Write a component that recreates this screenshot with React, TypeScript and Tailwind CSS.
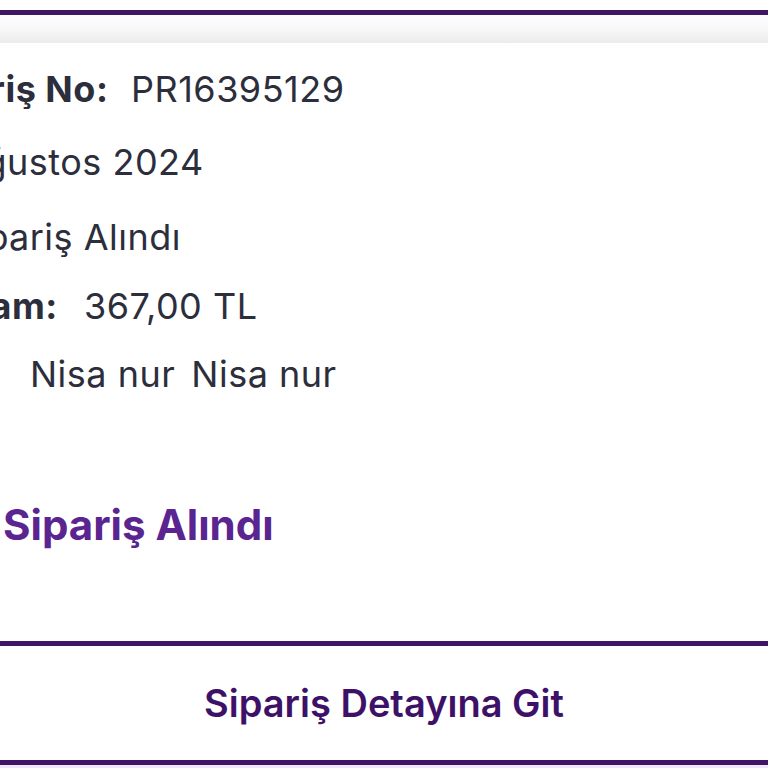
import React from 'react';

interface RowProps {
  hidden: React.ReactNode;
  shown: React.ReactNode;
  value?: React.ReactNode;
  offset: string;
  shownWidth?: string;
  className?: string;
}

// Each row: the part that falls left of the screen edge is right-aligned into a box that ends at x=0
const Row: React.FC<RowProps> = ({ hidden, shown, value, offset, shownWidth, className = '' }) => (
  <div className={`flex h-[42px] items-center whitespace-nowrap text-[36px] leading-[42px] tracking-[0.5px] text-[#2c2e3c] ${offset} ${className}`}>
    <span className="-ml-[300px] flex w-[300px] shrink-0 justify-end">{hidden}</span>
    <span className={`shrink-0 ${shownWidth ?? ''}`}>{shown}</span>
    {value && <span className="shrink-0">{value}</span>}
  </div>
);

export default function App() {
  return (
    <div
      className="flex h-[768px] w-[768px] flex-col overflow-hidden bg-white"
      style={{ fontFamily: 'Inter, "Noto Sans", sans-serif' }}
    >
      <div className="h-[10px] shrink-0 bg-white" />
      <div className="h-[5px] shrink-0 bg-[#3f1666]" />
      <div className="h-[28px] shrink-0 bg-linear-to-b from-[#fdfbff] via-[#f8f8f8] to-[#ebebeb]" />

      {/* order info */}
      <div className="flex flex-col">
        <Row
          className="mt-[25px]"
          offset="-ml-[10px]"
          hidden={<b className="font-bold">Sipa</b>}
          shown={<b className="font-bold">riş No:</b>}
          shownWidth="w-[141px]"
          value="PR16395129"
        />
        <Row
          className="mt-[31px]"
          offset="ml-[7px]"
          hidden={<><b className="mr-6 font-bold">Tarih:</b>14 Ağ</>}
          shown="ustos 2024"
        />
        <Row
          className="mt-[33px]"
          offset="ml-[9px]"
          hidden={<><b className="mr-6 font-bold">Durum:</b>Sip</>}
          shown="ariş Alındı"
        />
        <Row
          className="mt-[27px]"
          offset="ml-[12px]"
          hidden={<b className="font-bold">Topla</b>}
          shown={<b className="font-bold">m:</b>}
          shownWidth="w-[72px]"
          value="367,00 TL"
        />
        <Row
          className="mt-[26px]"
          offset="ml-[3px]"
          hidden={<b className="font-bold">Alıcı:</b>}
          shown=""
          shownWidth="w-[27px]"
          value={
            <>
              Nisa nur<span className="ml-[16px]">Nisa nur</span>
            </>
          }
        />
      </div>

      <h2 className="ml-[3px] mt-[106px] h-[48px] shrink-0 whitespace-nowrap text-[42px] font-bold leading-[48px] text-[#5a2590]">
        Sipariş Alındı
      </h2>

      <div className="mt-[92px] h-[5px] shrink-0 bg-[#3f1666]" />
      <button className="flex h-[114px] shrink-0 items-center justify-center bg-white text-[38px] font-semibold leading-[44px] text-[#3e1169]">
        Sipariş Detayına Git
      </button>
      <div className="h-[5px] shrink-0 bg-[#3f1666]" />
      <div className="flex-1 bg-[#f1e6fa]" />
    </div>
  );
}
